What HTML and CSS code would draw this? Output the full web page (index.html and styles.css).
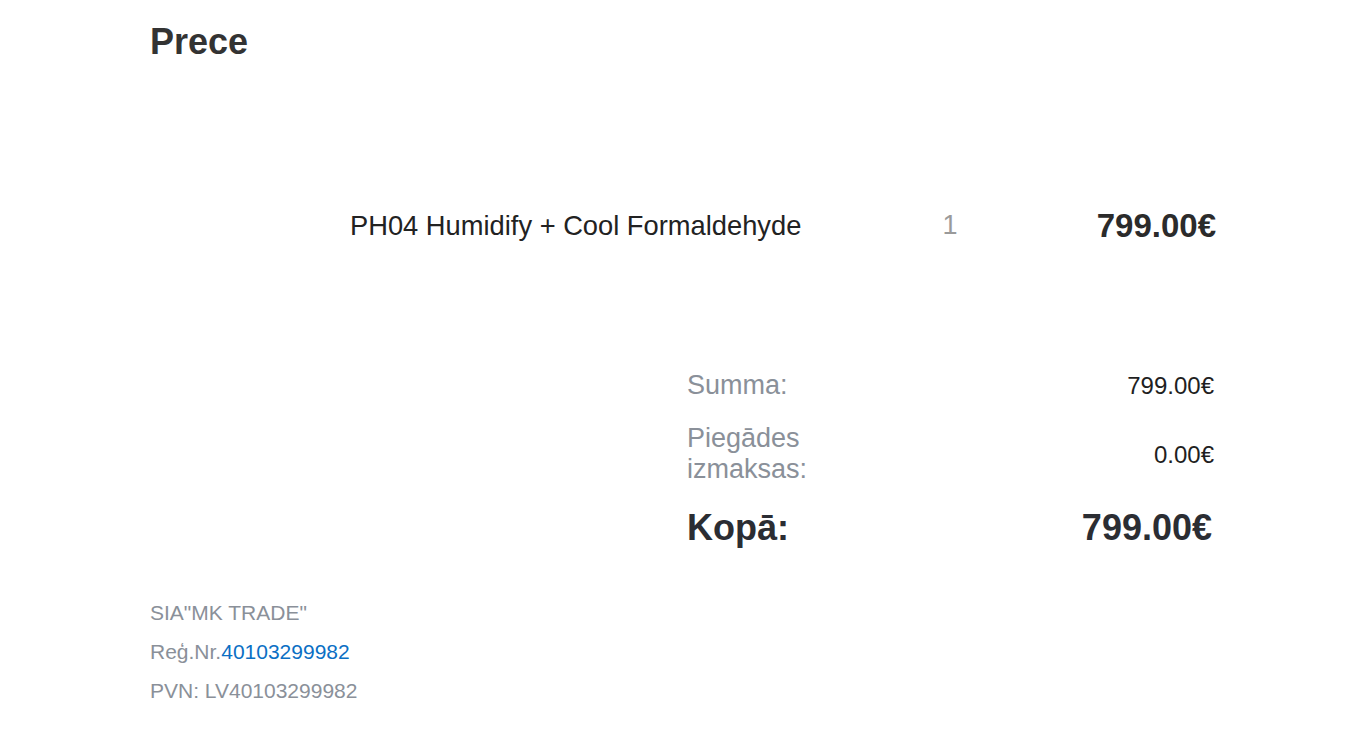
FILE: index.html
```html
<!DOCTYPE html>
<html lang="lv">
<head>
<meta charset="utf-8">
<title>Prece</title>
<link rel="stylesheet" href="styles.css">
</head>
<body>
<main class="order">
  <h1 class="title">Prece</h1>
  <section class="items">
    <div class="item">
      <div class="item-thumb"></div>
      <div class="item-name">PH04 Humidify + Cool Formaldehyde</div>
      <div class="item-qty">1</div>
      <div class="item-price">799.00€</div>
    </div>
  </section>
  <section class="totals">
    <div class="totals-row">
      <div class="totals-label">Summa:</div>
      <div class="totals-value">799.00€</div>
    </div>
    <div class="totals-row">
      <div class="totals-label">Piegādes izmaksas:</div>
      <div class="totals-value">0.00€</div>
    </div>
    <div class="totals-row totals-grand">
      <div class="totals-label">Kopā:</div>
      <div class="totals-value">799.00€</div>
    </div>
  </section>
  <footer class="company">
    <div class="company-line">SIA"MK TRADE"</div>
    <div class="company-line">Reģ.Nr.<a class="company-link" href="#">40103299982</a></div>
    <div class="company-line">PVN: LV40103299982</div>
  </footer>
</main>
</body>
</html>
```

FILE: styles.css
```css
html, body {
  margin: 0;
  padding: 0;
  background: #ffffff;
}

body {
  font-family: "Liberation Sans", Arial, sans-serif;
  color: #2b2b2b;
}

.order {
  width: 1066px;
  padding-left: 150px;
  padding-top: 21px;
}

.title {
  margin: 0;
  font-size: 36px;
  font-weight: bold;
  line-height: 41px;
  color: #333333;
}

.items {
  margin-top: 143px;
}

.item {
  display: grid;
  grid-template-columns: 200px 1fr 60px 236px;
  align-items: center;
  height: 41px;
}

.item-name {
  font-size: 27.3px;
  color: #222222;
}

.item-qty {
  font-size: 27px;
  color: #9a9a9a;
  text-align: center;
}

.item-price {
  font-size: 33px;
  font-weight: bold;
  color: #2b2b2b;
  text-align: right;
}

.totals {
  margin-top: 113px;
  margin-left: 537px;
  width: 527px;
}

.totals-row {
  display: grid;
  grid-template-columns: 200px 1fr;
  align-items: center;
  padding: 11px 0;
}

.totals-label {
  font-size: 27px;
  line-height: 31px;
  color: #8a9099;
}

.totals-value {
  font-size: 24px;
  line-height: 31px;
  color: #1f1f1f;
  text-align: right;
}

.totals-grand .totals-label,
.totals-grand .totals-value {
  font-size: 36px;
  line-height: 41px;
  font-weight: bold;
  color: #2b2d33;
}

.totals-grand .totals-value {
  padding-right: 2px;
}

.company {
  margin-top: 34px;
}

.company-line {
  font-size: 21px;
  line-height: 39px;
  color: #8a9099;
}

.company-link {
  color: #0b6fc4;
  text-decoration: none;
}
```
